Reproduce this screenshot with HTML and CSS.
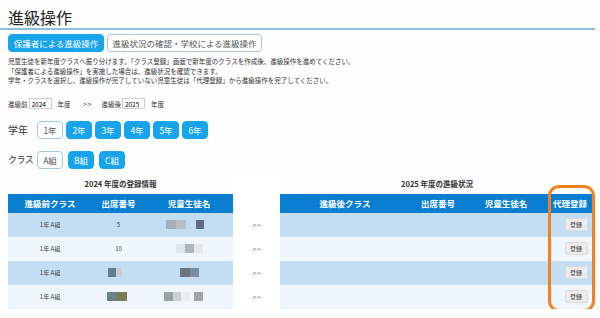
FILE: index.html
```html
<!DOCTYPE html>
<html lang="ja">
<head>
    <meta charset="UTF-8">
    <meta name="viewport" content="width=device-width, initial-scale=1.0">
    <title>進級操作</title>
    <link rel="stylesheet" href="styles.css">
</head>
<body>
    <div class="page">
        <h1 class="page-title">進級操作</h1>

        <div class="tabs">
            <button class="tab tab-active">保護者による進級操作</button>
            <button class="tab">進級状況の確認・学校による進級操作</button>
        </div>

        <div class="description">
            <p>児童生徒を新年度クラスへ振り分けます。「クラス登録」画面で新年度のクラスを作成後、進級操作を進めてください。</p>
            <p>「保護者による進級操作」を実施した場合は、進級状況を確認できます。</p>
            <p>学年・クラスを選択し、進級操作が完了していない児童生徒は「代理登録」から進級操作を完了してください。</p>
        </div>

        <div class="year-row">
            <span>進級前</span>
            <input class="year-input" type="text" value="2024">
            <span class="year-unit">年度</span>
            <span class="year-arrow">&gt;&gt;</span>
            <span>進級後</span>
            <input class="year-input" type="text" value="2025">
            <span class="year-unit">年度</span>
        </div>

        <div class="select-row grade-row">
            <span class="select-label">学年</span>
            <button class="chip chip-off">1年</button>
            <button class="chip">2年</button>
            <button class="chip">3年</button>
            <button class="chip">4年</button>
            <button class="chip">5年</button>
            <button class="chip">6年</button>
        </div>

        <div class="select-row class-row">
            <span class="select-label">クラス</span>
            <button class="chip chip-off">A組</button>
            <button class="chip">B組</button>
            <button class="chip">C組</button>
        </div>

        <div class="tables">
            <div class="table-block left-block">
                <div class="table-caption">2024 年度の登録情報</div>
                <table class="grid left-grid">
                    <tr>
                        <th class="c-class">進級前クラス</th>
                        <th class="c-num">出席番号</th>
                        <th class="c-name">児童生徒名</th>
                    </tr>
                    <tr>
                        <td>1年 A組</td>
                        <td>5</td>
                        <td><span class="mosaic m1"></span><span class="mosaic m1b"></span></td>
                    </tr>
                    <tr>
                        <td>1年 A組</td>
                        <td>10</td>
                        <td><span class="mosaic m2"></span></td>
                    </tr>
                    <tr>
                        <td>1年 A組</td>
                        <td><span class="mosaic m3n"></span></td>
                        <td><span class="mosaic m3"></span></td>
                    </tr>
                    <tr>
                        <td>1年 A組</td>
                        <td><span class="mosaic m4n"></span></td>
                        <td><span class="mosaic m4"></span><span class="mosaic m4b"></span></td>
                    </tr>
                </table>
            </div>

            <div class="arrow-col">
                <div class="arrow-cell">&gt;&gt;</div>
                <div class="arrow-cell">&gt;&gt;</div>
                <div class="arrow-cell">&gt;&gt;</div>
                <div class="arrow-cell">&gt;&gt;</div>
            </div>

            <div class="table-block right-block">
                <div class="table-caption">2025 年度の進級状況</div>
                <table class="grid right-grid">
                    <tr>
                        <th class="r-class">進級後クラス</th>
                        <th class="r-num">出席番号</th>
                        <th class="r-name">児童生徒名</th>
                        <th class="r-proxy">代理登録</th>
                    </tr>
                    <tr><td></td><td></td><td></td><td><button class="reg-btn">登録</button></td></tr>
                    <tr><td></td><td></td><td></td><td><button class="reg-btn">登録</button></td></tr>
                    <tr><td></td><td></td><td></td><td><button class="reg-btn">登録</button></td></tr>
                    <tr><td></td><td></td><td></td><td><button class="reg-btn">登録</button></td></tr>
                </table>
            </div>

            <!-- highlight around the proxy column -->
            <div class="highlight"></div>
        </div>
    </div>
</body>
</html>
```

FILE: styles.css
```css
body {
    margin: 0;
    background-color: #fdfdfd;
    font-family: "Noto Sans CJK JP", "Noto Sans", sans-serif;
    color: #333;
}

.page {
    width: 595px;
}

.page-title {
    font-size: 16px;
    font-weight: normal;
    line-height: 20px;
    margin: 0;
    padding: 7px 8px 1px;
    border-bottom: 2px solid #8fbfdf;
    color: #222;
}

.tabs {
    display: flex;
    gap: 3px;
    padding: 4px 8px 0;
}

.tab {
    font-family: inherit;
    font-size: 8.5px;
    height: 18px;
    padding: 0 4px;
    border-radius: 4px;
    border: 1px solid #a9c6d8;
    background-color: #fff;
    color: #555;
    line-height: 16px;
    white-space: nowrap;
}

.tab-active {
    width: 96px;
    background-color: #18a4ea;
    border-color: #18a4ea;
    color: #fff;
}

.tab:not(.tab-active) {
    width: 155px;
}

.description {
    padding: 5px 8px 0;
    font-size: 6.5px;
    line-height: 9.5px;
    color: #333;
}

.description p {
    margin: 0;
    height: 9.5px;
}

.year-row {
    display: flex;
    align-items: center;
    padding: 12px 8px 0;
    font-size: 6.5px;
    height: 12px;
}

.year-input {
    width: 23px;
    height: 11px;
    box-sizing: border-box;
    border: 1px solid #ccc;
    font-family: inherit;
    font-size: 6.5px;
    padding: 0 2px;
    margin: 0 0 0 1px;
    background-color: #fff;
}

.year-unit {
    margin-left: 6px;
}

.year-arrow {
    margin: 0 10px 0 12px;
    font-size: 8px;
    color: #555;
}

.select-row {
    display: flex;
    align-items: center;
    gap: 3px;
    padding: 0 8px;
}

.grade-row {
    margin-top: 11px;
}

.class-row {
    margin-top: 12px;
}

.select-label {
    width: 26px;
    font-size: 10px;
    white-space: nowrap;
    color: #333;
}

.class-row .select-label {
    font-size: 9px;
    letter-spacing: -0.5px;
}

.chip {
    font-family: inherit;
    font-size: 8.5px;
    width: 26px;
    height: 18px;
    padding: 0;
    border-radius: 4px;
    border: 1px solid #18a4ea;
    background-color: #18a4ea;
    color: #fff;
}

.chip-off {
    background-color: #fff;
    border-color: #9ccbe4;
    color: #555;
}

.class-row .chip {
    margin-right: 2px;
}

.tables {
    position: relative;
    display: flex;
    margin-top: 8px;
    padding-left: 8px;
}

.table-caption {
    font-size: 7.5px;
    font-weight: bold;
    text-align: center;
    height: 17px;
    line-height: 14px;
    color: #333;
}

.left-block {
    width: 225px;
}

.right-block {
    width: 314px;
}

.grid {
    border-collapse: collapse;
    width: 100%;
    table-layout: fixed;
}

.grid th {
    background-color: #0a7fd1;
    color: #fff;
    font-size: 8.5px;
    font-weight: bold;
    height: 19px;
    padding: 0;
    white-space: nowrap;
    overflow: hidden;
}

.grid td {
    height: 24px;
    padding: 0;
    text-align: center;
    font-size: 6px;
    color: #444;
}

.grid tr:nth-child(even) td {
    background-color: #c3def3;
}

.grid tr:nth-child(odd) td {
    background-color: #eef6fb;
}

.c-class { width: 84px; }
.c-num { width: 53px; }
.c-name { width: 88px; }

.r-class { width: 130px; }
.r-num { width: 56px; }
.r-name { width: 80px; }
.r-proxy { width: 48px; }

.arrow-col {
    width: 47px;
    padding-top: 36px;
    background-color: #fff;
}

.arrow-cell {
    height: 24px;
    line-height: 24px;
    text-align: center;
    font-size: 7.5px;
    color: #888;
}

.reg-btn {
    font-family: inherit;
    font-size: 6px;
    width: 23px;
    height: 13px;
    padding: 0;
    border: 1px solid #ddd;
    border-radius: 2px;
    background-color: #ececec;
    color: #444;
    margin-left: 12px;
}

.mosaic {
    display: inline-block;
    height: 9px;
    vertical-align: middle;
}

.m1 {
    width: 20px;
    background: linear-gradient(90deg, #a3aeb8 0 50%, #b6bec6 50%);
    margin-right: 10px;
    margin-left: -8px;
}

.m1b {
    width: 8px;
    background-color: #5e6b80;
}

.m2 {
    width: 27px;
    background: linear-gradient(90deg, #dce6ec 0 33%, #b1b4b9 33% 66%, #e3e6ea 66%);
}

.m3n {
    width: 14px;
    background: linear-gradient(90deg, #687a8d 0 60%, #c5ccd8 60%);
    margin-left: -8px;
}

.m3 {
    width: 19px;
    background: linear-gradient(90deg, #6c747d 0 50%, #7a90a2 50%);
}

.m4n {
    width: 20px;
    background: linear-gradient(90deg, #6a8189 0 50%, #7f7a52 50%);
    margin-left: -4px;
}

.m4 {
    width: 26px;
    background: linear-gradient(90deg, #99a1a1 0 33%, #c9d1d1 33% 66%, #e9edee 66%);
    margin-left: -11px;
    margin-right: 4px;
}

.m4b {
    width: 9px;
    background-color: #a0a4b1;
}

.highlight {
    position: absolute;
    left: 548px;
    top: 8px;
    width: 41px;
    height: 121px;
    border: 3px solid #f2811f;
    border-radius: 11px;
}
```
